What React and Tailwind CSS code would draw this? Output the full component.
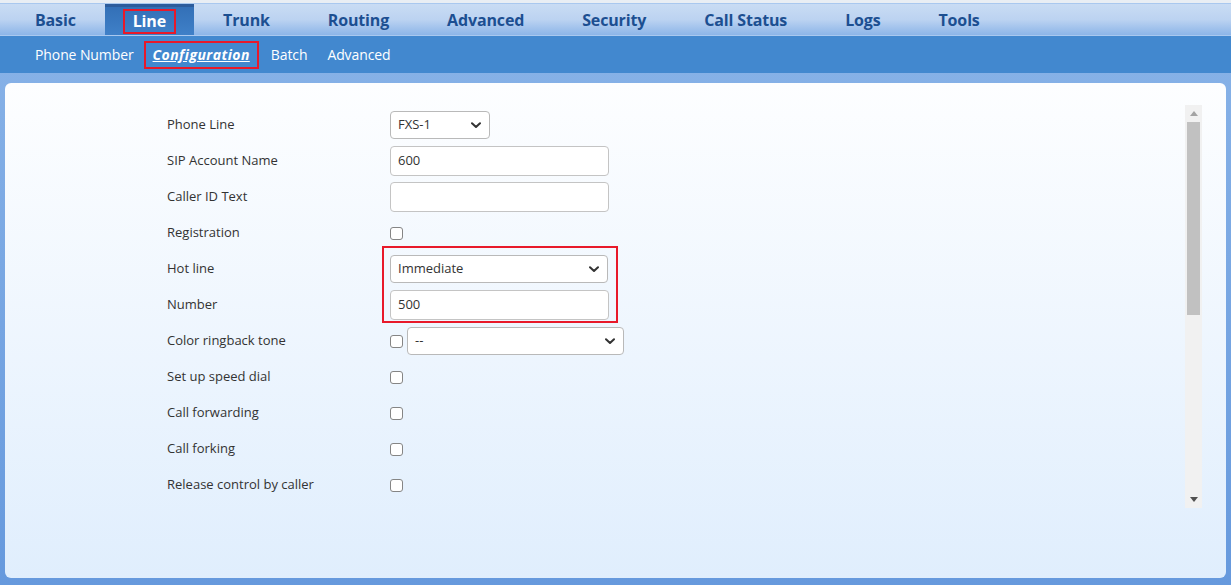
import React from "react";

const tabs = ["Basic", "Line", "Trunk", "Routing", "Advanced", "Security", "Call Status", "Logs", "Tools"];
const subs = ["Phone Number", "Configuration", "Batch", "Advanced"];

function Chevron() {
  return (
    <svg width="10" height="7" viewBox="0 0 10 7" className="shrink-0">
      <path d="M1 1.2 L5 5 L9 1.2" fill="none" stroke="#333" strokeWidth="2" strokeLinecap="round" strokeLinejoin="round" />
    </svg>
  );
}

function Select({ value, w, h = "h-[28px]" }) {
  return (
    <div className={`${w} ${h} flex items-center justify-between pl-[7px] pr-[8px] bg-white border border-[#b9b9b9] rounded-[4px] text-[13px] text-[#333]`}>
      <span>{value}</span>
      <Chevron />
    </div>
  );
}

function Input({ value }) {
  return (
    <div className="w-[219px] h-[30px] flex items-center px-[7px] bg-white border border-[#c4c4c4] rounded-[4px] text-[13px] text-[#333]">
      {value}
    </div>
  );
}

function Check() {
  return <div className="w-[13px] h-[13px] border border-[#858585] rounded-[3px] bg-white" />;
}

function Row({ label, children }) {
  return (
    <div className="h-[36px] flex items-center">
      <div className="w-[223px] text-[13px] text-[#333]">{label}</div>
      <div className="flex items-center gap-[4px]">{children}</div>
    </div>
  );
}

export default function App() {
  return (
    <div
      className="w-full h-[585px] flex flex-col bg-gradient-to-b from-[#8ab4e8] to-[#6699dd] overflow-hidden"
      style={{ fontFamily: '"Open Sans", "Noto Sans", sans-serif' }}
    >
      {/* top nav */}
      <div className="h-[36px] pt-[3px] bg-[#e9eef4] shrink-0">
        <div className="h-full border-t border-[#97a7ba] bg-gradient-to-b from-[#c9dcf4] via-[#bcd3f1] to-[#8cb5e8] border-b border-[#a9c8ef] flex pl-[6px]">
          {tabs.map((t) =>
            t === "Line" ? (
              <div key={t} className="px-[18px] flex items-center bg-gradient-to-b from-[#3370b7] to-[#3f80c8] border-t-[3px] border-[#2c5c9c]">
                <span className="text-[16px] font-bold text-white border-2 border-[#e8192a] px-[8px] leading-[21px] tracking-[-0.15px]">{t}</span>
              </div>
            ) : (
              <div key={t} className="px-[29px] flex items-center">
                <span className="text-[16px] font-bold text-[#1c4f91] tracking-[-0.15px]">{t}</span>
              </div>
            )
          )}
        </div>
      </div>
      {/* sub nav */}
      <div className="h-[37px] bg-[#4288cf] shrink-0 flex items-center pl-[25px]">
        {subs.map((s) =>
          s === "Configuration" ? (
            <div key={s} className="border-2 border-[#e8192a] px-[7px] h-[28px] flex items-center ml-[0px] mr-[2px]">
              <span className="text-[14px] font-bold italic underline text-white tracking-[0.45px]">{s}</span>
            </div>
          ) : (
            <div key={s} className="px-[10px] text-[14px] text-white tracking-[-0.1px]">{s}</div>
          )
        )}
      </div>
      {/* panel area */}
      <div className="flex-1 pt-[10px] pb-[7px] px-[5px] min-h-0">
        <div className="h-full rounded-[6px] bg-gradient-to-b from-[#fdfeff] to-[#e0eefd] pt-[22px] pl-[20px] pr-[24px]">
          <div className="h-[403px] flex">
            <div className="flex-1 pl-[142px] pt-[2px]">
              <Row label="Phone Line"><Select value="FXS-1" w="w-[100px]" /></Row>
              <Row label="SIP Account Name"><Input value="600" /></Row>
              <Row label="Caller ID Text"><Input value="" /></Row>
              <Row label="Registration"><Check /></Row>
              <div className="relative">
                <Row label="Hot line"><Select value="Immediate" w="w-[218px]" /></Row>
                <Row label="Number"><Input value="500" /></Row>
                <div className="absolute left-[215px] top-[-5px] w-[236px] h-[77px] border-2 border-[#e8192a]" />
              </div>
              <Row label="Color ringback tone"><Check /><Select value="--" w="w-[217px]" /></Row>
              <Row label="Set up speed dial"><Check /></Row>
              <Row label="Call forwarding"><Check /></Row>
              <Row label="Call forking"><Check /></Row>
              <Row label="Release control by caller"><Check /></Row>
            </div>
            {/* scrollbar */}
            <div className="w-[17px] h-full bg-[#f1f1f1] flex flex-col items-center">
              <div className="h-[17px] flex items-center justify-center">
                <svg width="8" height="5" viewBox="0 0 8 5"><path d="M0 5 L4 0 L8 5 Z" fill="#a3a3a3" /></svg>
              </div>
              <div className="w-[13px] h-[193px] bg-[#c1c1c1]" />
              <div className="flex-1" />
              <div className="h-[17px] flex items-center justify-center">
                <svg width="8" height="5" viewBox="0 0 8 5"><path d="M0 0 L8 0 L4 5 Z" fill="#505050" /></svg>
              </div>
            </div>
          </div>
        </div>
      </div>
    </div>
  );
}
